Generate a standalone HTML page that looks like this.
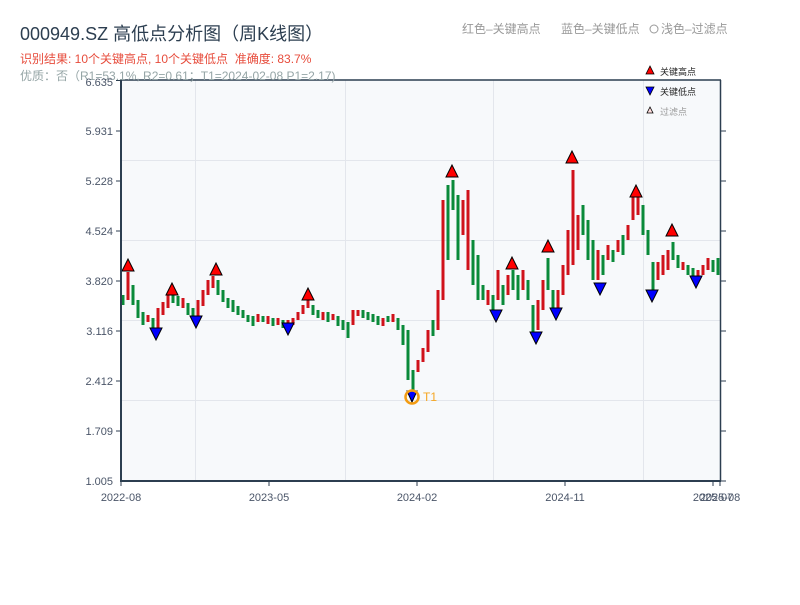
<!DOCTYPE html>
<html><head><meta charset="utf-8"><style>
body{margin:0;background:#fff;width:800px;height:600px;overflow:hidden;font-family:"Liberation Sans","Noto Sans CJK SC",sans-serif;}
svg text{font-family:"Liberation Sans","Noto Sans CJK SC",sans-serif;}
</style></head><body>
<svg width="800" height="600" xmlns="http://www.w3.org/2000/svg">
<rect x="121" y="80" width="600" height="401" fill="#f7f9fb"/>
<g stroke="#e3e6ec" stroke-width="1">
<line x1="121" x2="721" y1="160.5" y2="160.5"/><line x1="121" x2="721" y1="240.5" y2="240.5"/>
<line x1="121" x2="721" y1="320.5" y2="320.5"/><line x1="121" x2="721" y1="400.5" y2="400.5"/>
<line x1="195.5" x2="195.5" y1="80" y2="481"/><line x1="345.5" x2="345.5" y1="80" y2="481"/>
<line x1="493.5" x2="493.5" y1="80" y2="481"/><line x1="643.5" x2="643.5" y1="80" y2="481"/>
</g>
<path stroke="#d0121b" stroke-width="3" fill="none" d="M128 272V300M148 315V322M158 308V330M163 302V315M168 295V308M183 298V308M198 300V318M203 290V306M208 280V295M213 276V288M258 314V322M268 316V324M278 318V325M288 320V330M293 318V325M298 312V320M303 305V314M308 298V308M323 312V320M333 314V320M353 310V325M358 310V316M383 318V326M393 314V322M418 360V372M423 348V362M428 330V352M438 290V330M443 200V300M463 200V235M468 190V270M488 290V305M498 270V300M508 275V295M523 270V290M538 300V330M543 280V310M558 290V310M563 265V295M568 230V275M573 170V265M578 215V250M598 250V280M608 245V260M618 240V252M628 225V240M633 195V220M638 190V215M658 262V280M663 255V275M668 250V270M683 262V270M698 270V282M703 265V275M708 258V270"/>
<path stroke="#0a8a3a" stroke-width="3" fill="none" d="M123 295V305M133 285V305M138 300V318M143 312V325M153 318V330M173 293V303M178 296V306M188 303V315M193 308V320M218 280V295M223 290V302M228 298V308M233 300V312M238 306V315M243 310V318M248 315V322M253 316V326M263 316V322M273 318V326M283 320V328M313 305V315M318 310V318M328 312V322M338 316V326M343 320V330M348 322V338M363 310V318M368 312V320M373 314V322M378 316V325M388 316V322M398 318V330M403 325V345M408 330V380M413 370V392M433 320V336M448 185V260M453 180V210M458 195V260M473 240V285M478 255V300M483 285V300M493 295V310M503 285V305M513 270V290M518 275V300M528 280V300M533 305V335M548 258V290M553 290V310M583 205V235M588 220V260M593 240V280M603 255V275M613 250V262M623 235V255M643 205V235M648 230V255M653 262V290M673 242V260M678 255V268M688 265V275M693 268V280M713 260V272M718 258V275"/>
<g fill="red" stroke="#000" stroke-width="1">
<polygon points="128,259 122,271 134,271"/><polygon points="172,283 166,295 178,295"/><polygon points="216,263 210,275 222,275"/><polygon points="308,288 302,300 314,300"/><polygon points="452,165 446,177 458,177"/><polygon points="512,257 506,269 518,269"/><polygon points="548,240 542,252 554,252"/><polygon points="572,151 566,163 578,163"/><polygon points="636,185 630,197 642,197"/><polygon points="672,224 666,236 678,236"/>
</g>
<g fill="blue" stroke="#000" stroke-width="1">
<polygon points="150,328 162,328 156,340"/><polygon points="190,316 202,316 196,328"/><polygon points="282,323 294,323 288,335"/><polygon points="490,310 502,310 496,322"/><polygon points="530,332 542,332 536,344"/><polygon points="550,308 562,308 556,320"/><polygon points="594,283 606,283 600,295"/><polygon points="646,290 658,290 652,302"/><polygon points="690,276 702,276 696,288"/>
<polygon points="407,391 417,391 412,402"/>
</g>
<circle cx="412" cy="397" r="6.5" fill="none" stroke="#f39c12" stroke-width="2.5"/>
<text x="423" y="401" font-size="12" fill="#f5a623">T1</text>
<g stroke="#2c3e50" stroke-width="2" fill="none">
<line x1="121" y1="79" x2="121" y2="482"/><line x1="120" y1="481" x2="721" y2="481"/>
<line x1="121" y1="80" x2="721" y2="80" stroke-width="1.5"/><line x1="720.5" y1="80" x2="720.5" y2="481" stroke-width="1.5"/>
</g>
<g stroke="#2c3e50" stroke-width="1">
<line x1="121" x2="121" y1="481" y2="486"/><line x1="269" x2="269" y1="481" y2="486"/><line x1="417" x2="417" y1="481" y2="486"/><line x1="565" x2="565" y1="481" y2="486"/><line x1="713" x2="713" y1="481" y2="486"/><line x1="720" x2="720" y1="481" y2="486"/>
<line x1="116" x2="121" y1="80.5" y2="80.5"/><line x1="116" x2="121" y1="131" y2="131"/><line x1="116" x2="121" y1="181" y2="181"/><line x1="116" x2="121" y1="231" y2="231"/><line x1="116" x2="121" y1="281" y2="281"/><line x1="116" x2="121" y1="331" y2="331"/><line x1="116" x2="121" y1="381" y2="381"/><line x1="116" x2="121" y1="431" y2="431"/>
<line x1="721" x2="726" y1="131" y2="131"/><line x1="721" x2="726" y1="181" y2="181"/><line x1="721" x2="726" y1="231" y2="231"/><line x1="721" x2="726" y1="281" y2="281"/><line x1="721" x2="726" y1="331" y2="331"/><line x1="721" x2="726" y1="381" y2="381"/><line x1="721" x2="726" y1="431" y2="431"/><line x1="721" x2="726" y1="481" y2="481"/>
</g>
<g font-size="11" fill="#4a5568" text-anchor="end">
<text x="113" y="135">5.931</text><text x="113" y="185">5.228</text><text x="113" y="235">4.524</text><text x="113" y="285">3.820</text><text x="113" y="335">3.116</text><text x="113" y="385">2.412</text><text x="113" y="435">1.709</text><text x="113" y="485">1.005</text>
</g>
<g font-size="11" fill="#4a5568" text-anchor="middle">
<text x="121" y="501">2022-08</text><text x="269" y="501">2023-05</text><text x="417" y="501">2024-02</text><text x="565" y="501">2024-11</text><text x="713" y="501">2025-07</text><text x="720" y="501">2025-08</text>
</g>
<text x="20" y="40" font-size="18" fill="#2c3e50">000949.SZ 高低点分析图（周K线图）</text>
<text x="20" y="63" font-size="12" fill="#e74c3c">识别结果: 10个关键高点, 10个关键低点&#160;&#160;准确度: 83.7%</text>
<text x="20" y="80" font-size="12" fill="#95a5a6">优质：否（R1=53.1%, R2=0.61；T1=2024-02-08 P1=2.17)</text>
<text x="113" y="86" font-size="11" fill="#4a5568" text-anchor="end">6.635</text>
<text x="462" y="33" font-size="12" fill="#999">红色–关键高点</text>
<text x="561" y="33" font-size="12" fill="#999">蓝色–关键低点</text>
<circle cx="654" cy="29" r="4" fill="none" stroke="#999"/>
<text x="661" y="33" font-size="12" fill="#999">浅色–过滤点</text>
<polygon points="650,66 646,74 654,74" fill="red" stroke="#000" stroke-width="0.8"/>
<text x="660" y="75" font-size="9" fill="#222">关键高点</text>
<polygon points="646,87 654,87 650,95" fill="blue" stroke="#000" stroke-width="0.8"/>
<text x="660" y="95" font-size="9" fill="#222">关键低点</text>
<polygon points="650,107 647,113 653,113" fill="#fdd" stroke="#000" stroke-width="0.8"/>
<text x="660" y="115" font-size="9" fill="#999">过滤点</text>
</svg>
</body></html>
